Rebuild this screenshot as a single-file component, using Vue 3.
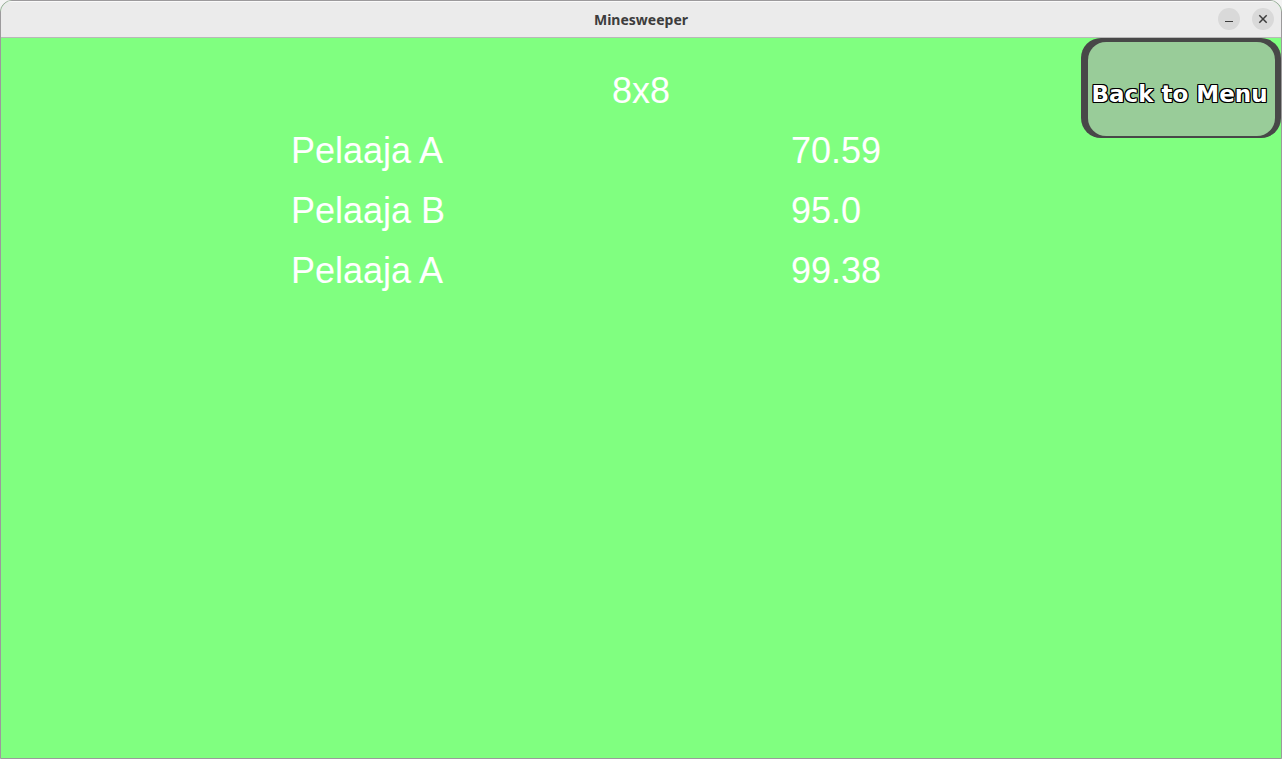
<script setup>
const scores = [
  { name: 'Pelaaja A', time: '70.59' },
  { name: 'Pelaaja B', time: '95.0' },
  { name: 'Pelaaja A', time: '99.38' },
]
</script>

<template>
  <div class="window">
    <header class="titlebar">
      <h1 class="title">Minesweeper</h1>
      <div class="controls">
        <button class="control" type="button" aria-label="Minimize">
          <svg width="22" height="22" viewBox="0 0 22 22" aria-hidden="true">
            <path d="M7 13.5h8" stroke="#3d3d3d" stroke-width="1" fill="none" />
          </svg>
        </button>
        <button class="control" type="button" aria-label="Close">
          <svg width="22" height="22" viewBox="0 0 22 22" aria-hidden="true">
            <path d="M7.3 7.3l7.4 7.4M14.7 7.3l-7.4 7.4" stroke="#3d3d3d" stroke-width="1.5" fill="none" />
          </svg>
        </button>
      </div>
    </header>

    <main class="board">
      <table class="scores">
        <caption>8x8</caption>
        <tbody>
          <tr v-for="(score, index) in scores" :key="index">
            <td class="name">{{ score.name }}</td>
            <td class="time">{{ score.time }}</td>
          </tr>
        </tbody>
      </table>
      <button class="back" type="button">
        <span class="face">Back to Menu</span>
      </button>
    </main>
  </div>
</template>

<style>
body {
  margin: 0;
  background: #f4f4f4;
}
</style>

<style scoped>
.window {
  box-sizing: border-box;
  min-height: 100vh;
  display: flex;
  flex-direction: column;
  border: 1px solid #9c9a9c;
  border-radius: 12px 12px 0 0;
  overflow: hidden;
  background: #80ff80;
}

.titlebar {
  box-sizing: border-box;
  height: 37px;
  display: grid;
  grid-template-columns: 1fr auto 1fr;
  align-items: center;
  border-bottom: 1px solid #b8b8b8;
  background: #ebebeb;
  box-shadow: inset 0 1px #fafafa;
}

.title {
  grid-column: 2;
  margin: 0;
  padding-top: 2px;
  font: 700 14px/20px "Noto Sans", "Open Sans", sans-serif;
  color: #3d3d3d;
}

.controls {
  display: flex;
  justify-content: flex-end;
  gap: 12px;
  padding-right: 7px;
}

.control {
  width: 22px;
  height: 22px;
  padding: 0;
  border: 0;
  border-radius: 50%;
  background: #d9d9d9;
}

.control svg {
  display: block;
}

.board {
  flex: 1;
  display: grid;
  grid-template-columns: 200px 1fr 200px;
  align-items: start;
}

.scores {
  grid-column: 2;
  justify-self: center;
  width: 700px;
  margin-top: 23px;
  border-collapse: collapse;
  table-layout: fixed;
  font: 36px/60px "Liberation Sans", Arial, sans-serif;
  color: #ffffff;
}

.scores td {
  padding: 0;
}

.name {
  width: 500px;
}

.back {
  width: 200px;
  height: 100px;
  display: flex;
  padding: 4px 6px 2px 7px;
  border: 0;
  border-radius: 20px;
  background: #484848;
}

.face {
  flex: 1;
  align-self: stretch;
  display: flex;
  align-items: center;
  justify-content: center;
  padding: 10px 4px 0 0;
  border-radius: 18px;
  background: #99cc99;
  color: #ffffff;
  font: 700 23px/28px "DejaVu Sans", Verdana, sans-serif;
  white-space: nowrap;
  text-shadow:
    1px 0 #000, -1px 0 #000, 0 1px #000, 0 -1px #000,
    1px 1px #000, -1px -1px #000, 1px -1px #000, -1px 1px #000;
}
</style>
